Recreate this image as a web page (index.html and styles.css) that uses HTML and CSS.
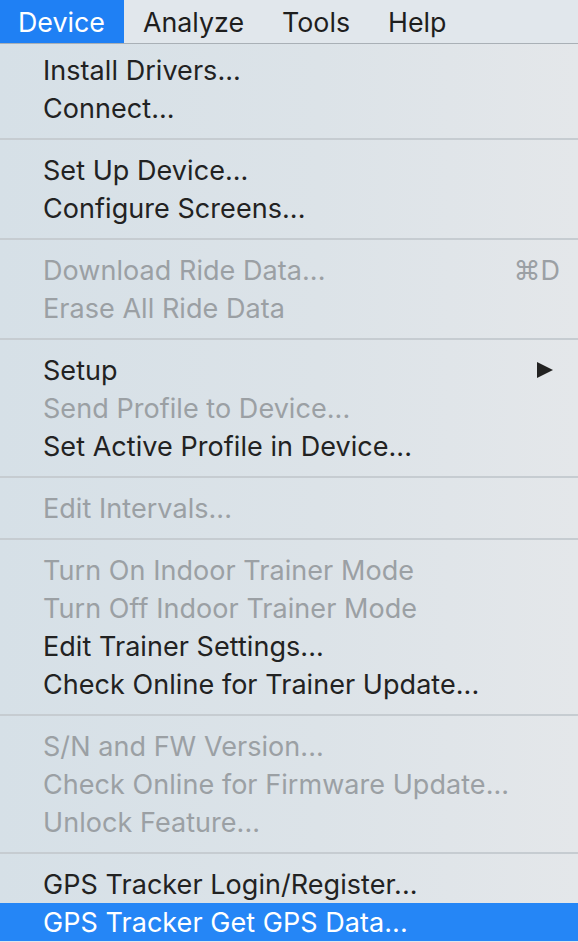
FILE: index.html
```html
<!DOCTYPE html>
<html lang="en">
<head>
    <meta charset="UTF-8">
    <meta name="viewport" content="width=device-width, initial-scale=1.0">
    <title>Device Menu</title>
    <link rel="stylesheet" href="styles.css">
</head>
<body>

<header class="menu-bar">
    <span class="bar-item active">Device</span>
    <span class="bar-item">Analyze</span>
    <span class="bar-item">Tools</span>
    <span class="bar-item">Help</span>
</header>

<div class="menu">
    <div class="item">Install Drivers...</div>
    <div class="item">Connect...</div>
    <div class="separator"></div>
    <div class="item">Set Up Device...</div>
    <div class="item">Configure Screens...</div>
    <div class="separator"></div>
    <div class="item disabled">Download Ride Data... <span class="shortcut">⌘D</span></div>
    <div class="item disabled">Erase All Ride Data</div>
    <div class="separator"></div>
    <div class="item">Setup <span class="arrow"></span></div>
    <div class="item disabled">Send Profile to Device...</div>
    <div class="item">Set Active Profile in Device...</div>
    <div class="separator"></div>
    <div class="item disabled">Edit Intervals...</div>
    <div class="separator"></div>
    <div class="item disabled">Turn On Indoor Trainer Mode</div>
    <div class="item disabled">Turn Off Indoor Trainer Mode</div>
    <div class="item">Edit Trainer Settings...</div>
    <div class="item">Check Online for Trainer Update...</div>
    <div class="separator"></div>
    <div class="item disabled">S/N and FW Version...</div>
    <div class="item disabled">Check Online for Firmware Update...</div>
    <div class="item disabled">Unlock Feature...</div>
    <div class="separator"></div>
    <div class="item">GPS Tracker Login/Register...</div>
    <div class="item selected">GPS Tracker Get GPS Data...</div>
</div>

</body>
</html>
```

FILE: styles.css
```css
body {
    margin: 0;
    padding: 0;
    font-family: Inter, "Liberation Sans", sans-serif;
    background-color: #dfe5ea;
    color: #222;
    overflow: hidden;
}

.menu-bar {
    display: flex;
    height: 43px;
    border-bottom: 1px solid #a9b0b6;
    background-color: #e1e7ec;
}

.bar-item {
    display: flex;
    align-items: center;
    padding: 0 19px;
    font-size: 26.8px;
    color: #1e1e1e;
}

.bar-item.active {
    background-color: #1f80f4;
    color: white;
    padding: 0 18px;
    min-width: 88px;
}

.menu {
    padding-top: 7px;
    background: linear-gradient(90deg, #d6e0e7 0%, #dce3e8 55%, #e4e7ea 100%);
}

.item {
    display: flex;
    align-items: center;
    height: 38px;
    padding: 0 25px 0 43px;
    font-size: 27px;
    letter-spacing: 0.05px;
    white-space: nowrap;
}

.item.disabled {
    color: #9ba0a4;
}

.item.selected {
    background-color: #2586f6;
    color: white;
}

.shortcut {
    margin-left: auto;
    margin-right: -7px;
}

.arrow {
    margin-left: auto;
    width: 0;
    height: 0;
    border-top: 8px solid transparent;
    border-bottom: 8px solid transparent;
    border-left: 16px solid #222;
}

.separator {
    height: 2px;
    margin: 11px 0;
    background-color: #c6ccd1;
}

.separator + .item {
    margin-top: 1px;
}
```
